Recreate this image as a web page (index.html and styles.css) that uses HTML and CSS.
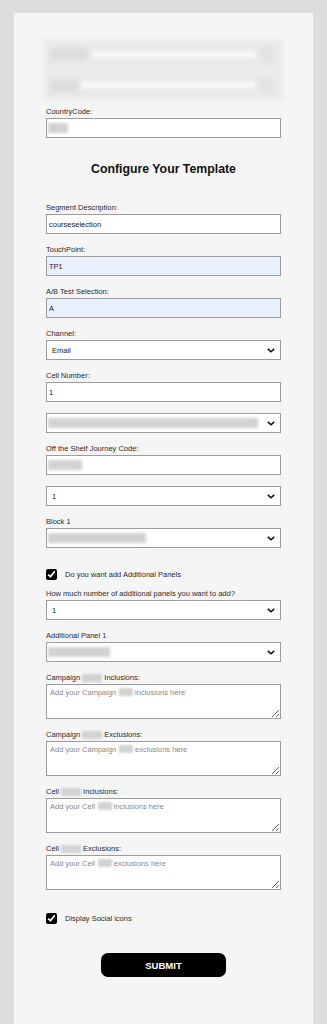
FILE: index.html
```html
<!DOCTYPE html>
<html lang="en">
<head>
  <meta charset="UTF-8">
  <meta name="viewport" content="width=device-width, initial-scale=1.0">
  <title>Configure Your Template</title>
  <link rel="stylesheet" href="styles.css">
</head>
<body>
  <div class="card">
    <!-- header fields, hidden behind a blur -->
    <div class="blur-panel">
      <div class="blur-row">
        <span class="blur-text"></span>
        <span class="blur-bar"></span>
        <span class="blur-circle"></span>
      </div>
      <div class="blur-row">
        <span class="blur-text short"></span>
        <span class="blur-bar"></span>
        <span class="blur-circle"></span>
      </div>
    </div>

    <form class="template-form">
      <div class="field">
        <label>CountryCode:</label>
        <div class="control">
          <input type="text" class="text-input">
          <span class="redact redact-xs"></span>
        </div>
      </div>

      <h2 class="form-title">Configure Your Template</h2>

      <div class="field">
        <label>Segment Description:</label>
        <input type="text" class="text-input" value="courseselection">
      </div>
      <div class="field">
        <label>TouchPoint:</label>
        <input type="text" class="text-input autofilled" value="TP1">
      </div>
      <div class="field">
        <label>A/B Test Selection:</label>
        <input type="text" class="text-input autofilled" value="A">
      </div>
      <div class="field">
        <label>Channel:</label>
        <div class="control">
          <select class="select-input"><option>Email</option></select>
          <svg class="chevron" viewBox="0 0 10 6"><path d="M1 1l4 3.6L9 1"/></svg>
        </div>
      </div>
      <div class="field">
        <label>Cell Number:</label>
        <input type="text" class="text-input" value="1">
      </div>
      <div class="field">
        <div class="control">
          <select class="select-input"><option></option></select>
          <span class="redact redact-xl"></span>
          <svg class="chevron" viewBox="0 0 10 6"><path d="M1 1l4 3.6L9 1"/></svg>
        </div>
      </div>
      <div class="field">
        <label>Off the Shelf Journey Code:</label>
        <div class="control">
          <input type="text" class="text-input">
          <span class="redact redact-sm"></span>
        </div>
      </div>
      <div class="field">
        <div class="control">
          <select class="select-input"><option>1</option></select>
          <svg class="chevron" viewBox="0 0 10 6"><path d="M1 1l4 3.6L9 1"/></svg>
        </div>
      </div>
      <div class="field">
        <label>Block 1</label>
        <div class="control">
          <select class="select-input"><option></option></select>
          <span class="redact redact-lg"></span>
          <svg class="chevron" viewBox="0 0 10 6"><path d="M1 1l4 3.6L9 1"/></svg>
        </div>
      </div>

      <label class="check-row">
        <input type="checkbox" checked>
        <span>Do you want add Additional Panels</span>
      </label>

      <div class="field">
        <label>How much number of additional panels you want to add?</label>
        <div class="control">
          <select class="select-input"><option>1</option></select>
          <svg class="chevron" viewBox="0 0 10 6"><path d="M1 1l4 3.6L9 1"/></svg>
        </div>
      </div>
      <div class="field">
        <label>Additional Panel 1</label>
        <div class="control">
          <select class="select-input"><option></option></select>
          <span class="redact redact-md"></span>
          <svg class="chevron" viewBox="0 0 10 6"><path d="M1 1l4 3.6L9 1"/></svg>
        </div>
      </div>

      <div class="field">
        <label>Campaign <span class="hidden-word"></span> Inclusions:</label>
        <div class="control">
          <textarea class="text-area" placeholder="Add your Campaign         inclusions here"></textarea>
          <span class="hidden-word in-campaign"></span>
        </div>
      </div>
      <div class="field">
        <label>Campaign <span class="hidden-word"></span> Exclusions:</label>
        <div class="control">
          <textarea class="text-area" placeholder="Add your Campaign         exclusions here"></textarea>
          <span class="hidden-word in-campaign"></span>
        </div>
      </div>
      <div class="field">
        <label>Cell <span class="hidden-word"></span> Inclusions:</label>
        <div class="control">
          <textarea class="text-area" placeholder="Add your Cell         inclusions here"></textarea>
          <span class="hidden-word in-cell"></span>
        </div>
      </div>
      <div class="field">
        <label>Cell <span class="hidden-word"></span> Exclusions:</label>
        <div class="control">
          <textarea class="text-area" placeholder="Add your Cell         exclusions here"></textarea>
          <span class="hidden-word in-cell"></span>
        </div>
      </div>

      <label class="check-row social">
        <input type="checkbox" checked>
        <span>Display Social icons</span>
      </label>

      <div class="actions">
        <button type="button" class="submit-button">SUBMIT</button>
      </div>
    </form>
  </div>
</body>
</html>
```

FILE: styles.css
```css
body {
  margin: 0;
  padding: 13px 14px 0;
  background-color: #dddddd;
  font-family: "Liberation Sans", Arial, sans-serif;
  color: #222;
}
.card {
  background-color: #f5f5f5;
  padding: 27px 32px 60px;
  min-height: 960px;
}

/* blurred header */
.blur-panel {
  margin: 0 -2px 7px;
  height: 60px;
  background-color: #e9e9e9;
  filter: blur(2.5px);
  display: flex;
  flex-direction: column;
}
.blur-row {
  flex: 1;
  display: flex;
  align-items: center;
  padding: 0 8px 0 6px;
  gap: 4px;
}
.blur-row + .blur-row {
  border-top: 3px solid #eeeeee;
}
.blur-text {
  width: 38px;
  height: 12px;
  background-color: #dcdcdc;
  border-radius: 4px;
}
.blur-text.short {
  width: 28px;
}
.blur-bar {
  flex: 1;
  height: 5px;
  background-color: #ffffff;
}
.blur-circle {
  width: 16px;
  height: 16px;
  border-radius: 50%;
  background-color: #e2e2e2;
}

/* form */
.field {
  margin-bottom: 11px;
}
.field label {
  display: block;
  font-size: 7.5px;
  line-height: 9px;
  margin-bottom: 2px;
  color: #2b2b2b;
}
.control {
  position: relative;
}
.text-input,
.select-input {
  display: block;
  box-sizing: border-box;
  width: 100%;
  height: 20px;
  margin: 0;
  border: 1px solid #9d9d9d;
  border-radius: 0;
  background-color: #ffffff;
  font-family: inherit;
  font-size: 7.5px;
  color: #1a1a1a;
  outline: none;
}
.text-input {
  padding: 0 2px;
}
.text-input.autofilled {
  background-color: #e8f0fe;
}
.select-input {
  appearance: none;
  -webkit-appearance: none;
  padding: 0 5px;
}
.chevron {
  position: absolute;
  right: 6px;
  top: 8px;
  width: 8px;
  height: 5px;
  fill: none;
  stroke: #111;
  stroke-width: 2;
}
.redact {
  position: absolute;
  left: 2px;
  top: 5px;
  height: 10px;
  background-color: #d2d2d2;
  filter: blur(1.5px);
}
.redact-xs { width: 20px; }
.redact-sm { width: 34px; }
.redact-md { width: 62px; }
.redact-lg { width: 98px; }
.redact-xl { width: 210px; }
.hidden-word {
  display: inline-block;
  width: 20px;
  height: 8px;
  vertical-align: middle;
  background-color: #d3d3d3;
  filter: blur(1px);
}
.hidden-word.in-campaign,
.hidden-word.in-cell {
  position: absolute;
  top: 4px;
  width: 14px;
}
.hidden-word.in-campaign { left: 73px; }
.hidden-word.in-cell { left: 52px; }
.text-area {
  display: block;
  box-sizing: border-box;
  width: 100%;
  height: 35px;
  margin: 0;
  padding: 3px;
  border: 1px solid #9d9d9d;
  border-radius: 0;
  background-color: #ffffff;
  font-family: inherit;
  font-size: 7.5px;
  resize: vertical;
  outline: none;
}
.text-area::placeholder {
  color: #888;
  white-space: pre;
}

.form-title {
  margin: 24px 0 26px;
  font-size: 12.3px;
  line-height: 15px;
  text-align: center;
  color: #111;
}

.check-row {
  display: flex;
  align-items: center;
  gap: 8px;
  margin: 21px 0 9px;
  font-size: 7.5px;
  line-height: 11px;
  color: #2b2b2b;
}
.check-row input {
  width: 11px;
  height: 11px;
  margin: 0;
  accent-color: #000;
}
.check-row.social {
  margin: 23px 0 29px;
}

.actions {
  display: flex;
  justify-content: center;
}
.submit-button {
  width: 125px;
  height: 24px;
  border: none;
  border-radius: 7px;
  background-color: #000;
  color: #fff;
  font-family: inherit;
  font-size: 9.5px;
  font-weight: bold;
  cursor: pointer;
}
```
